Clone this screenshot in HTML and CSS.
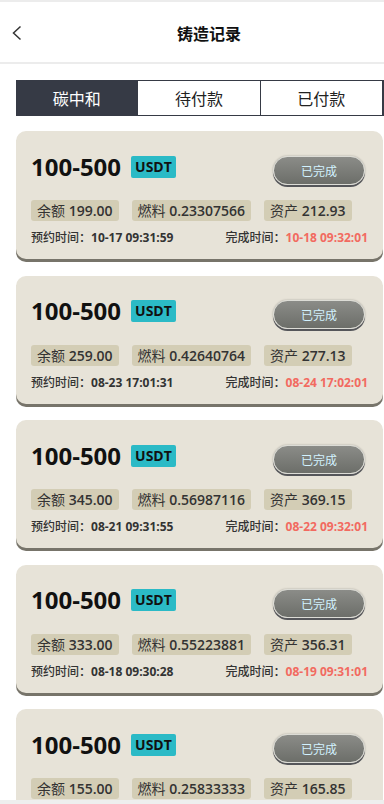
FILE: index.html
```html
<!DOCTYPE html>
<html lang="zh">
<head>
<meta charset="utf-8">
<link rel="stylesheet" href="styles.css">
</head>
<body>
<div class="page">
  <header class="header">
    <span class="back"><svg width="12" height="16" viewBox="0 0 12 16"><path d="M9.5 1.5 L2.5 8 L9.5 14.5" fill="none" stroke="#333" stroke-width="1.5"/></svg></span>
    <h1 class="title">铸造记录</h1>
  </header>
  <nav class="tabs">
    <div class="tab active">碳中和</div>
    <div class="tab">待付款</div>
    <div class="tab">已付款</div>
  </nav>
  <main class="list">
    <div class="card">
      <div class="top"><span class="range">100-500</span><span class="badge">USDT</span><span class="status">已完成</span></div>
      <div class="chips"><span class="chip"><i>余额</i> 199.00</span><span class="chip"><i>燃料</i> 0.23307566</span><span class="chip"><i>资产</i> 212.93</span></div>
      <div class="times"><span><i>预约时间：</i>10-17 09:31:59</span><span><i>完成时间：</i><em>10-18 09:32:01</em></span></div>
    </div>
    <div class="card">
      <div class="top"><span class="range">100-500</span><span class="badge">USDT</span><span class="status">已完成</span></div>
      <div class="chips"><span class="chip"><i>余额</i> 259.00</span><span class="chip"><i>燃料</i> 0.42640764</span><span class="chip"><i>资产</i> 277.13</span></div>
      <div class="times"><span><i>预约时间：</i>08-23 17:01:31</span><span><i>完成时间：</i><em>08-24 17:02:01</em></span></div>
    </div>
    <div class="card">
      <div class="top"><span class="range">100-500</span><span class="badge">USDT</span><span class="status">已完成</span></div>
      <div class="chips"><span class="chip"><i>余额</i> 345.00</span><span class="chip"><i>燃料</i> 0.56987116</span><span class="chip"><i>资产</i> 369.15</span></div>
      <div class="times"><span><i>预约时间：</i>08-21 09:31:55</span><span><i>完成时间：</i><em>08-22 09:32:01</em></span></div>
    </div>
    <div class="card">
      <div class="top"><span class="range">100-500</span><span class="badge">USDT</span><span class="status">已完成</span></div>
      <div class="chips"><span class="chip"><i>余额</i> 333.00</span><span class="chip"><i>燃料</i> 0.55223881</span><span class="chip"><i>资产</i> 356.31</span></div>
      <div class="times"><span><i>预约时间：</i>08-18 09:30:28</span><span><i>完成时间：</i><em>08-19 09:31:01</em></span></div>
    </div>
    <div class="card">
      <div class="top"><span class="range">100-500</span><span class="badge">USDT</span><span class="status">已完成</span></div>
      <div class="chips"><span class="chip"><i>余额</i> 155.00</span><span class="chip"><i>燃料</i> 0.25833333</span><span class="chip"><i>资产</i> 165.85</span></div>
      <div class="times"><span><i>预约时间：</i>08-15 09:31:02</span><span><i>完成时间：</i><em>08-16 09:32:01</em></span></div>
    </div>
  </main>
</div>
<div class="bottom-bar"></div>
</body>
</html>
```
FILE: styles.css
```css
* { box-sizing: border-box; margin: 0; padding: 0; }
html, body { background: #fff; }
body {
  font-family: "Open Sans", "Noto Sans CJK SC", sans-serif;
  color: #222;
  overflow: hidden;
  height: 804px;
}
i { font-style: normal; font-family: "Noto Sans CJK SC", sans-serif; font-weight: 400; }
.page { border-top: 2px solid #ececec; }
.header {
  height: 62px;
  display: flex;
  align-items: center;
  justify-content: center;
  border-bottom: 2px solid #ececec;
  position: relative;
  padding-left: 34px;
}
.back { position: absolute; left: 11px; top: 23px; display: flex; }
.title { font-size: 16px; font-weight: 700; color: #111; font-family: "Noto Sans CJK SC", sans-serif; margin-top: 1px; }
.tabs {
  display: flex;
  margin: 16px 0 15px 16px;
  height: 36px;
}
.tab {
  flex: 1;
  display: flex;
  align-items: center;
  justify-content: center;
  font-family: "Noto Sans CJK SC", sans-serif;
  font-size: 16px;
  color: #222;
  border: 1px solid #363a45;
  border-left: none;
}
.tab:last-child { border-right: 2px solid #363a45; }
.tab.active { background: #363a45; color: #fff; }
.list { display: flex; flex-direction: column; gap: 16.5px; padding-left: 16px; padding-right: 1px; }
.card {
  background: #e7e3d8;
  border-radius: 10px;
  box-shadow: 0 3px 0 #77746a;
  padding: 15px 15px 0 15px;
  height: 128px;
  flex-shrink: 0;
}
.top { display: flex; align-items: center; height: 40px; }
.range { font-size: 24px; font-weight: 700; color: #111; }
.badge {
  margin-left: 10px;
  background: #2bbac6;
  color: #111;
  font-size: 14px;
  font-weight: 700;
  padding: 0 4px;
  height: 22px;
  line-height: 22px;
  border-radius: 2px;
  margin-top: 1px;
}
.status {
  margin-left: auto;
  margin-right: 3px;
  width: 92px;
  height: 29px;
  border-radius: 15px;
  background: linear-gradient(#8b8c88, #6c6e69);
  border: 1px solid #dcdcd6;
  box-shadow: 0 2px 0 #55565a, 0 0 2px rgba(0,0,0,0.3);
  color: #d2f2ff;
  font-family: "Noto Sans CJK SC", sans-serif;
  font-size: 12px;
  display: flex;
  align-items: center;
  justify-content: center;
  margin-top: 8px;
}
.chips { display: flex; gap: 13px; margin-top: 14px; }
.chip {
  background: #d3cdb5;
  border-radius: 3px;
  height: 21px;
  line-height: 21px;
  padding: 0 6px;
  font-size: 14px;
  font-weight: 600;
  color: #333;
  white-space: nowrap;
}
.times {
  display: flex;
  justify-content: space-between;
  margin-top: 7px;
  font-size: 12px;
  font-weight: 700;
  color: #333;
  white-space: nowrap;
}
.times i { font-weight: 500; }
.times em { font-style: normal; color: #f26a60; }
.bottom-bar { position: fixed; left: 0; right: 0; bottom: 0; height: 4px; background: #eee; }
```
